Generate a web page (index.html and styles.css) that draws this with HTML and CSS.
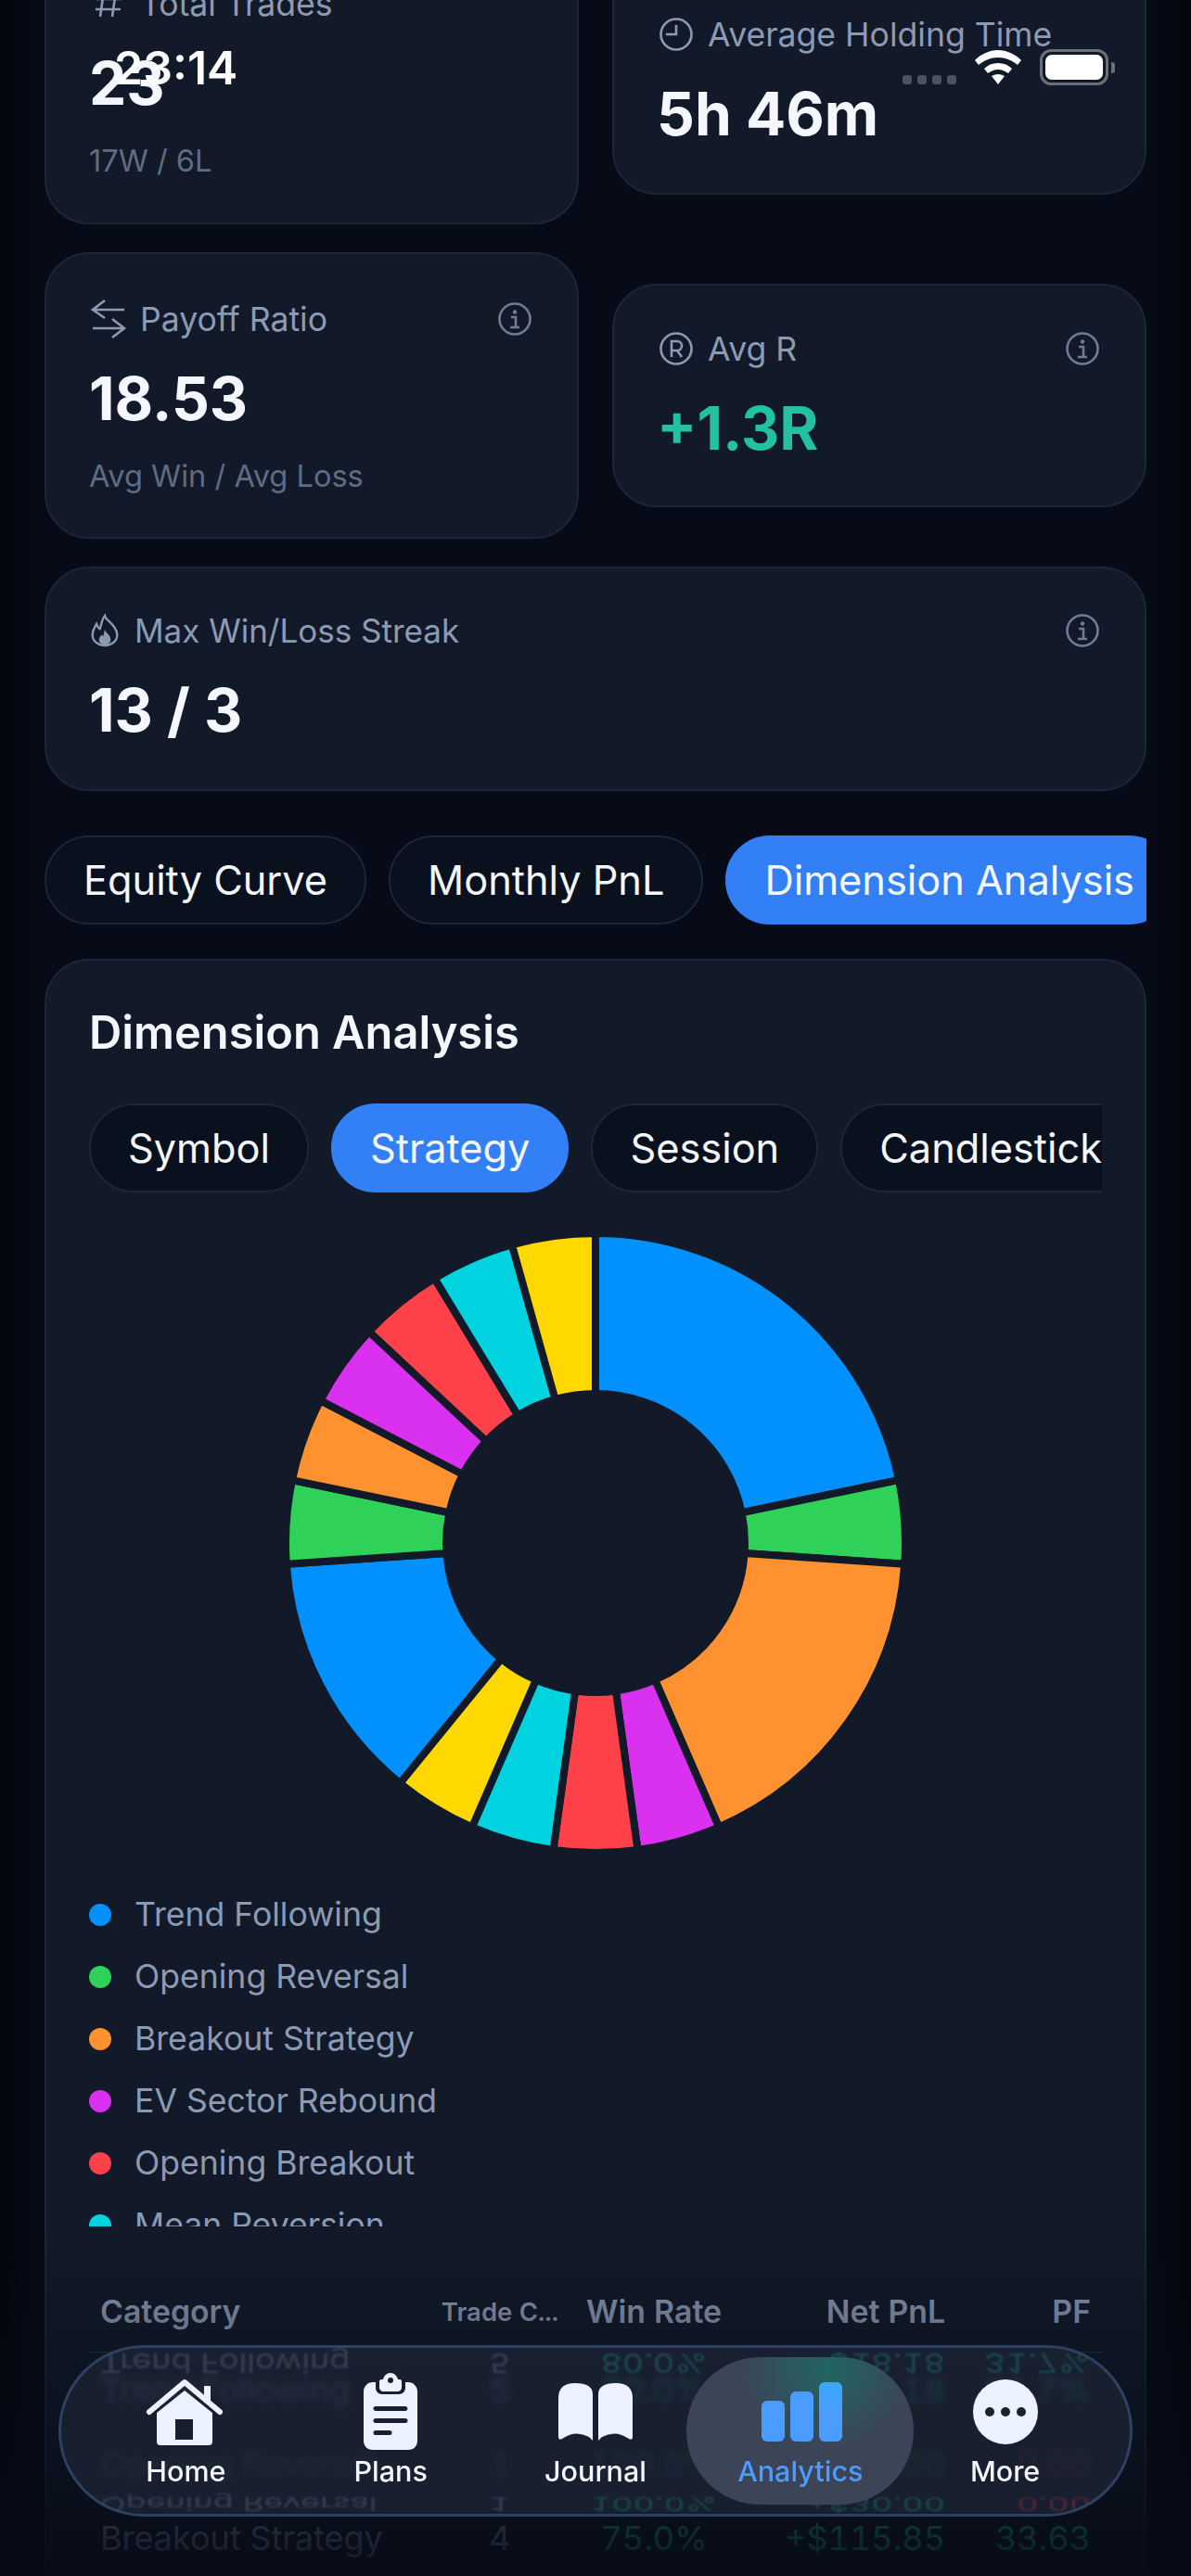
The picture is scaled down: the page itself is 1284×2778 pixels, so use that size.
FILE: index.html
```html
<!DOCTYPE html>
<html lang="en">
<head>
    <meta charset="UTF-8">
    <meta name="viewport" content="width=device-width, initial-scale=1.0">
    <title>Analytics</title>
    <link rel="stylesheet" href="styles.css">
</head>
<body>
    <div class="screen">
        <main class="content">
            <div class="stat-columns">
                <div class="stat-col">
                    <section class="card stat-card stat-trades">
                        <div class="stat-label">
                            <svg class="label-icon" viewBox="0 0 36 36"><path d="M13 4 9 32M26 4l-4 28M5 13h27M4 24h27"/></svg>
                            <span>Total Trades</span>
                        </div>
                        <div class="stat-value">23</div>
                        <div class="stat-sub">17W / 6L</div>
                    </section>
                    <section class="card stat-card stat-payoff">
                        <div class="stat-label">
                            <svg class="label-icon" viewBox="0 0 36 36"><path d="M1 8h34M14-2 1 8l13 9M35 28H1M22 18l13 10-13 10"/></svg>
                            <span>Payoff Ratio</span>
                            <svg class="info-icon" viewBox="0 0 36 36"><circle cx="18" cy="18" r="16.5"/><circle class="dot" cx="18" cy="10.5" r="2.2"/><path d="M14 16h5v11M13 27h10"/></svg>
                        </div>
                        <div class="stat-value">18.53</div>
                        <div class="stat-sub">Avg Win / Avg Loss</div>
                    </section>
                </div>
                <div class="stat-col">
                    <section class="card stat-card stat-holding">
                        <div class="stat-label">
                            <svg class="label-icon" viewBox="0 0 36 36"><circle cx="18" cy="18" r="16.5"/><path d="M18 8v10H7"/></svg>
                            <span>Average Holding Time</span>
                        </div>
                        <div class="stat-value">5h 46m</div>
                    </section>
                    <section class="card stat-card stat-avgr">
                        <div class="stat-label">
                            <svg class="label-icon" viewBox="0 0 36 36"><circle cx="18" cy="18" r="16.5"/><path d="M13 27V10h6a5 5 0 0 1 0 10h-6M19 20l5 7"/></svg>
                            <span>Avg R</span>
                            <svg class="info-icon" viewBox="0 0 36 36"><circle cx="18" cy="18" r="16.5"/><circle class="dot" cx="18" cy="10.5" r="2.2"/><path d="M14 16h5v11M13 27h10"/></svg>
                        </div>
                        <div class="stat-value positive">+1.3R</div>
                    </section>
                </div>
            </div>

            <section class="card stat-card stat-streak">
                <div class="stat-label">
                    <svg class="label-icon flame" viewBox="0 0 36 40"><path d="M18 2c1 6 14 10 15 23 0 8-7 13-15 13S3 33 3 25c0-6 3-9 5-13 1 3 2 5 4 6 2-5 2-11 6-16Z"/><path class="fill" d="M18 19c1 4 7 6 7 12 0 4-3 6-7 6s-7-2-7-6c0-3 2-4 3-6l2 2c1-3 1-5 2-8Z"/></svg>
                    <span>Max Win/Loss Streak</span>
                    <svg class="info-icon" viewBox="0 0 36 36"><circle cx="18" cy="18" r="16.5"/><circle class="dot" cx="18" cy="10.5" r="2.2"/><path d="M14 16h5v11M13 27h10"/></svg>
                </div>
                <div class="stat-value">13 / 3</div>
            </section>

            <div class="pill-row main-tabs">
                <button class="pill">Equity Curve</button>
                <button class="pill">Monthly PnL</button>
                <button class="pill active">Dimension Analysis</button>
            </div>

            <section class="card dimension-card">
                <h2>Dimension Analysis</h2>
                <div class="pill-row sub-tabs">
                    <button class="pill">Symbol</button>
                    <button class="pill active">Strategy</button>
                    <button class="pill">Session</button>
                    <button class="pill">Candlestick</button>
                </div>

                <svg class="donut" id="donut" viewBox="0 0 680 680"></svg>

                <ul class="legend">
                    <li><i class="swatch c-blue"></i>Trend Following</li>
                    <li><i class="swatch c-green"></i>Opening Reversal</li>
                    <li><i class="swatch c-orange"></i>Breakout Strategy</li>
                    <li><i class="swatch c-purple"></i>EV Sector Rebound</li>
                    <li><i class="swatch c-red"></i>Opening Breakout</li>
                    <li><i class="swatch c-cyan"></i>Mean Reversion</li>
                </ul>

                <div class="table">
                    <div class="tr th">
                        <span>Category</span><span class="small">Trade C...</span><span class="center">Win Rate</span><span class="right">Net PnL</span><span class="right">PF</span>
                    </div>
                    <div class="tr">
                        <span>Trend Following</span><span class="center">5</span><span class="center gain">80.0%</span><span class="right gain">+$18.18</span><span class="right gain">31.7%</span>
                    </div>
                    <div class="tr">
                        <span>Opening Reversal</span><span class="center">1</span><span class="center gain">100.0%</span><span class="right gain">+$30.00</span><span class="right loss">0.00</span>
                    </div>
                    <div class="tr">
                        <span>Breakout Strategy</span><span class="center">4</span><span class="center gain">75.0%</span><span class="right gain">+$115.85</span><span class="right gain">33.63</span>
                    </div>
                </div>
            </section>
        </main>

        <div class="bottom-fade"></div>

        <div class="status-bar">
            <span class="clock">23:14</span>
            <div class="status-icons">
                <span class="signal"><i></i><i></i><i></i><i></i></span>
                <svg class="wifi" viewBox="0 0 50 37"><path d="M25 0c9 0 18 4 25 11l-4 5c-6-5-13-8-21-8S10 11 4 16l-4-5C7 4 16 0 25 0Z"/><path d="M25 14c6 0 11 2 15 6l-4 5c-3-2-7-4-11-4s-8 2-11 4l-4-5c4-4 9-6 15-6Z"/><path d="M25 26c3 0 5 1 7 2l-7 9-7-9c2-1 4-2 7-2Z"/></svg>
                <span class="battery"><b></b></span>
            </div>
        </div>

        <nav class="tabbar">
            <div class="refract">
                <div class="tr mirror mirror-top">
                    <span>Trend Following</span><span class="center">5</span><span class="center gain">80.0%</span><span class="right gain">+$18.18</span><span class="right gain">31.7%</span>
                </div>
                <div class="tr mirror mirror-bottom">
                    <span>Opening Reversal</span><span class="center">1</span><span class="center gain">100.0%</span><span class="right gain">+$30.00</span><span class="right loss">0.00</span>
                </div>
            </div>
            <a class="tab">
                <svg class="tab-icon" viewBox="-3 -6 90 84"><path class="roof" d="M3 36 41 4l38 32"/><rect x="62" y="8" width="7" height="18" rx="1"/><path fill-rule="evenodd" d="M11 37 41 13l30 24v31a4 4 0 0 1-4 4H15a4 4 0 0 1-4-4Zm20 7v22h19V44Z"/></svg>
                <span>Home</span>
            </a>
            <a class="tab">
                <svg class="tab-icon" viewBox="-16 0 90 84"><path fill-rule="evenodd" d="M10 10h3v6c0 4 3 7 7 7h18c4 0 7-3 7-7v-6h3c6 0 10 5 10 10v53c0 6-4 10-10 10H10C4 83 0 79 0 73V20c0-5 4-10 10-10Zm3 26a2.5 2.5 0 0 0 0 5h32a2.5 2.5 0 0 0 0-5Zm0 13a2.5 2.5 0 0 0 0 5h32a2.5 2.5 0 0 0 0-5Zm0 13a2.5 2.5 0 0 0 0 5h15a2.5 2.5 0 0 0 0-5Z"/><path fill-rule="evenodd" d="M29 0c4 0 7 3 8 7h2c1 0 2 1 2 2v7c0 2-2 4-4 4H21c-2 0-4-2-4-4V9c0-1 1-2 2-2h2c1-4 4-7 8-7Zm0 5a3 3 0 1 0 0 6 3 3 0 0 0 0-6Z"/></svg>
                <span>Plans</span>
            </a>
            <a class="tab">
                <svg class="tab-icon" viewBox="-5 -11 90 84"><path d="M37 12Q37 0 18 0 0 0 0 16v42q0 4 4 2 14-10 29-2l4 4Z"/><path d="M43 12Q43 0 62 0q18 0 18 16v42q0 4-4 2-14-10-29-2l-4 4Z"/></svg>
                <span>Journal</span>
            </a>
            <a class="tab active">
                <svg class="tab-icon" viewBox="-3 -10 90 84"><defs><linearGradient id="barTop" x1="0" y1="0" x2="0" y2="1"><stop offset="0" stop-color="#38a8ff"/><stop offset="0.5" stop-color="#4a9dff"/></linearGradient></defs><rect y="20" width="25" height="44" rx="6"/><rect x="31" y="10" width="25" height="54" rx="6"/><rect x="62" width="25" height="64" rx="6" fill="url(#barTop)"/></svg>
                <span>Analytics</span>
            </a>
            <a class="tab">
                <svg class="tab-icon" viewBox="-10 -7 90 84"><circle cx="35" cy="35" r="35"/><circle class="cut" cx="18" cy="35" r="5"/><circle class="cut" cx="35" cy="35" r="5"/><circle class="cut" cx="52" cy="35" r="5"/></svg>
                <span>More</span>
            </a>
        </nav>
    </div>

    <script src="chart.js"></script>
</body>
</html>
```

FILE: styles.css
```css
* {
    box-sizing: border-box;
}
html, body {
    margin: 0;
    padding: 0;
    background: #060b16;
}
body {
    font-family: Inter, "Liberation Sans", sans-serif;
    color: #f4f7ff;
}
.screen {
    position: relative;
    width: 1284px;
    height: 2778px;
    overflow: hidden;
    background: linear-gradient(90deg, #03060e 0, #060b17 48px, #060b17 1236px, #03060e 100%);
}
/* page is scrolled, first cards start above the fold */
.content {
    margin-top: -66px;
    padding: 0 48px;
}
.card {
    background: #121a29;
    border: 2px solid #1c2637;
    border-radius: 48px;
}

/* stat cards */
.stat-columns {
    display: grid;
    grid-template-columns: 576px 576px;
    gap: 36px;
}
.stat-col {
    display: flex;
    flex-direction: column;
}
.stat-card {
    padding: 46px 46px 0;
}
.stat-trades {
    height: 308px;
    margin-bottom: 30px;
}
.stat-payoff {
    height: 309px;
    padding-top: 48px;
}
.stat-holding {
    height: 276px;
    margin-bottom: 96px;
    padding-top: 79px;
}
.stat-avgr {
    height: 241px;
}
.stat-streak {
    height: 242px;
    margin-top: 30px;
    padding-top: 45px;
}
.stat-label {
    display: flex;
    align-items: center;
    gap: 16px;
    height: 44px;
    font-size: 35.6px;
    color: #8d9ab4;
    white-space: nowrap;
}
.stat-streak .stat-label {
    font-size: 35px;
}
.label-icon {
    width: 36px;
    height: 36px;
    flex: none;
    margin-left: 3px;
    overflow: visible;
    fill: none;
    stroke: #8d9ab4;
    stroke-width: 2.6;
}
.label-icon.flame {
    width: 32px;
    height: 38px;
    margin-left: 1px;
}
.label-icon .fill {
    fill: #8d9ab4;
    stroke: none;
}
.info-icon {
    width: 36px;
    height: 36px;
    margin-left: auto;
    margin-right: 3px;
    fill: none;
    stroke: #6f7c94;
    stroke-width: 2.6;
}
.info-icon .dot {
    fill: #6f7c94;
    stroke: none;
}
.stat-value {
    margin-top: 28px;
    font-size: 64px;
    line-height: 72px;
    font-weight: 700;
    color: #f4f7ff;
}
.stat-value.positive {
    color: #22c1a0;
}
.stat-sub {
    margin-top: 27px;
    font-size: 32.6px;
    line-height: 40px;
    color: #5f6c84;
}

/* pills */
.pill-row {
    display: flex;
    gap: 24px;
    overflow: hidden;
}
.pill {
    flex: none;
    height: 96px;
    padding: 0 40px;
    font-family: inherit;
    font-size: 43.3px;
    color: #f4f7ff;
    background: #0a111e;
    border: 2px solid #1c2637;
    border-radius: 48px;
}
.pill.active {
    background: #3380f6;
    border-color: #3380f6;
}
.main-tabs {
    margin-top: 48px;
}

/* dimension card */
.dimension-card {
    position: relative;
    margin-top: 37px;
    height: 1800px;
    padding: 46px 46px 0;
}
.dimension-card h2 {
    margin: 0;
    font-size: 48.8px;
    line-height: 64px;
    font-weight: 600;
    color: #f4f7ff;
}
.sub-tabs {
    margin-top: 44px;
}
.donut {
    display: block;
    width: 680px;
    height: 680px;
    margin: 38px auto 0;
}
.legend {
    list-style: none;
    margin: 27px 0 0;
    padding: 0;
    height: 370px;
    overflow: hidden;
}
.legend li {
    display: flex;
    align-items: center;
    gap: 25px;
    height: 67px;
    font-size: 35.6px;
    color: #8d9ab4;
}
.swatch {
    width: 24px;
    height: 24px;
    border-radius: 50%;
}
.c-blue { background: #0091ff; }
.c-green { background: #30d158; }
.c-orange { background: #ff9230; }
.c-purple { background: #da30f0; }
.c-red { background: #ff4249; }
.c-cyan { background: #00d3e0; }

/* table behind the tab bar */
.table {
    margin-top: 48px;
}
.tr {
    display: grid;
    grid-template-columns: 369px 148px 184px 234px 157px;
    align-items: center;
    height: 80px;
    font-size: 36px;
    color: #8d9ab4;
    font-variant-numeric: tabular-nums;
}
.tr span {
    padding: 0 12px;
    white-space: nowrap;
}
.tr.th {
    height: 88px;
    font-size: 33.8px;
    font-weight: 600;
    color: #8d9ab4;
    border-bottom: 1px solid #2a3446;
}
.tr .small {
    font-size: 27.5px;
    text-align: center;
    padding: 0;
}
.center {
    text-align: center;
}
.right {
    text-align: right;
}
.gain {
    color: #22c1a0;
}
.loss {
    color: #ff4249;
}
.bottom-fade {
    position: absolute;
    left: 0;
    right: 0;
    bottom: 0;
    height: 378px;
    background: linear-gradient(180deg, rgba(6, 11, 22, 0) 0, rgba(6, 11, 22, 0.92) 100%);
    pointer-events: none;
}

/* status bar */
.status-bar {
    position: absolute;
    top: 45px;
    left: 123px;
    right: 89px;
    display: flex;
    justify-content: space-between;
    align-items: flex-start;
}
.clock {
    font-size: 50px;
    line-height: 56px;
    font-weight: 600;
    color: #fff;
}
.status-icons {
    display: flex;
    align-items: flex-start;
    gap: 20px;
    margin-top: 8px;
}
.signal {
    display: flex;
    gap: 6px;
    margin-top: 28px;
}
.signal i {
    width: 10px;
    height: 10px;
    border-radius: 3px;
    background: #4b525f;
}
.wifi {
    width: 50px;
    height: 37px;
    margin-top: 1px;
    fill: #fff;
}
.battery {
    position: relative;
    display: block;
    width: 74px;
    height: 39px;
    padding: 3px;
    border: 3px solid #6b7078;
    border-radius: 12px;
}
.battery b {
    display: block;
    height: 100%;
    background: #fff;
    border-radius: 7px;
}
.battery::after {
    content: "";
    position: absolute;
    right: -10px;
    top: 11px;
    width: 4px;
    height: 12px;
    background: #6b7078;
    border-radius: 0 3px 3px 0;
}

/* tab bar */
.tabbar {
    position: absolute;
    left: 63px;
    top: 2529px;
    width: 1158px;
    height: 185px;
    display: grid;
    grid-template-columns: repeat(5, 1fr);
    padding: 10px 24px;
    background: rgba(28, 36, 52, 0.78);
    border: 3px solid #2d4163;
    border-radius: 93px;
    backdrop-filter: blur(3px);
}
/* mirrored edge of the glass */
.refract {
    position: absolute;
    inset: 0;
    overflow: hidden;
    border-radius: inherit;
    opacity: 0.26;
    filter: blur(1.2px);
}
.mirror {
    position: absolute;
    left: 30px;
    width: 1092px;
}
.mirror-top {
    top: -24px;
    transform: scaleY(-0.8);
}
.mirror-bottom {
    top: 128px;
    transform: scaleY(-0.55);
}
.tab {
    position: relative;
    display: flex;
    flex-direction: column;
    align-items: center;
    padding-top: 17px;
    border-radius: 80px;
    color: #f4f7ff;
    font-size: 30.5px;
    line-height: 40px;
    font-weight: 500;
}
.tab.active {
    margin: 0 -12px;
    background: radial-gradient(ellipse 38% 55% at 62% 8%, rgba(24, 112, 102, 0.75), rgba(24, 112, 102, 0) 100%), #3c4557;
    color: #4a9dff;
}
.tab-icon {
    width: 90px;
    height: 84px;
    margin-bottom: 2px;
    fill: #ecf2ff;
}
.tab-icon .roof {
    fill: none;
    stroke: #ecf2ff;
    stroke-width: 6;
    stroke-linecap: round;
    stroke-linejoin: round;
}
.tab-icon .cut {
    fill: #1a2232;
}
.tab.active .tab-icon {
    fill: #4a9dff;
}
```

FILE: chart.js
```js
// trades per strategy, drawn clockwise from 12 o'clock
const slices = [
    [5, '#0091ff'], [1, '#30d158'], [4, '#ff9230'], [1, '#da30f0'], [1, '#ff4249'], [1, '#00d3e0'], [1, '#ffd800'],
    [3, '#0091ff'], [1, '#30d158'], [1, '#ff9230'], [1, '#da30f0'], [1, '#ff4249'], [1, '#00d3e0'], [1, '#ffd800']
];
const total = slices.reduce((sum, s) => sum + s[0], 0);
const cx = 340, cy = 340, outer = 334, inner = 161;

function point(radius, angle) {
    const rad = angle * Math.PI / 180;
    return (cx + radius * Math.sin(rad)).toFixed(2) + ' ' + (cy - radius * Math.cos(rad)).toFixed(2);
}

let start = 0;
let markup = '';
slices.forEach(([count, color]) => {
    const end = start + count / total * 360;
    const large = end - start > 180 ? 1 : 0;
    const d = `M${point(outer, start)}A${outer} ${outer} 0 ${large} 1 ${point(outer, end)}L${point(inner, end)}A${inner} ${inner} 0 ${large} 0 ${point(inner, start)}Z`;
    markup += `<path d="${d}" fill="${color}" stroke="#121a29" stroke-width="8"/>`;
    start = end;
});
document.getElementById('donut').innerHTML = markup;
```
